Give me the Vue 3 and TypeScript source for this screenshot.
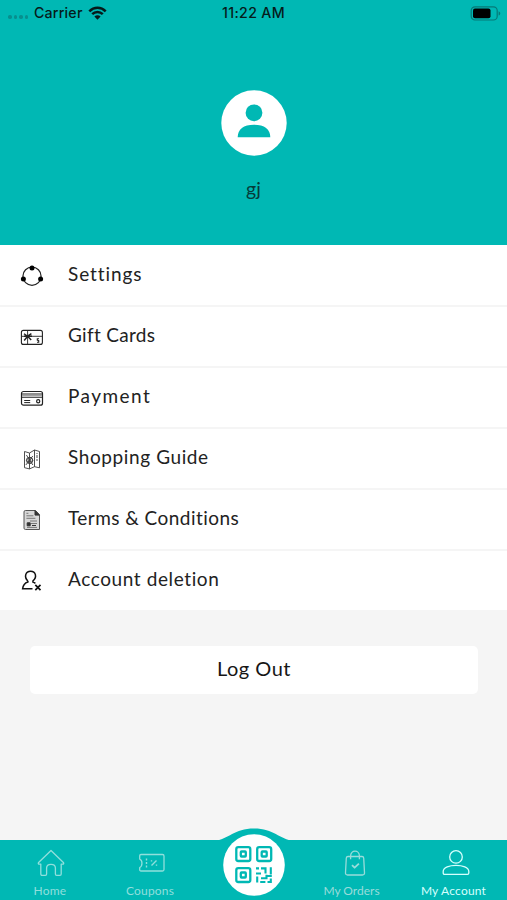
<script setup lang="ts">
interface MenuItem {
  icon: string
  label: string
  spacing: number
}

const items: MenuItem[] = [
  { icon: 'settings', label: 'Settings', spacing: 0.9 },
  { icon: 'gift', label: 'Gift Cards', spacing: 0.3 },
  { icon: 'payment', label: 'Payment', spacing: 1.45 },
  { icon: 'guide', label: 'Shopping Guide', spacing: 0.6 },
  { icon: 'terms', label: 'Terms & Conditions', spacing: 0.45 },
  { icon: 'deletion', label: 'Account deletion', spacing: 0.6 },
]
</script>

<template>
  <main class="screen">
    <header class="hero">
      <div class="status">
        <div class="carrier">
          <span class="dots"><i v-for="n in 4" :key="n"></i></span>
          <span class="carrier-name">Carrier</span>
          <svg class="wifi" width="19" height="14" viewBox="0 0 19 14">
            <path d="M1.3 5.3C5.9.7 13.1.7 17.7 5.3M4.2 8.2c3-2.9 7.6-2.9 10.6 0" fill="none" stroke="#061b1b" stroke-width="2.5" />
            <path d="M9.5 13.7 6.4 10.5c1.7-1.6 4.5-1.6 6.2 0z" fill="#061b1b" />
          </svg>
        </div>
        <span class="time">11:22 AM</span>
        <svg class="battery" width="31" height="15" viewBox="0 0 31 15">
          <rect x="1.2" y=".8" width="26" height="13.2" rx="3.8" fill="none" stroke="#067977" stroke-width="1.2" />
          <rect x="3" y="2.6" width="17.5" height="9.6" rx="2" fill="#000" />
          <path d="M28.6 5.2c2.2.8 2.2 3.6 0 4.4z" fill="#067977" />
        </svg>
      </div>
      <svg class="avatar" width="66" height="66" viewBox="0 0 66 66">
        <circle cx="33" cy="33" r="32.7" fill="#fff" />
        <circle cx="33" cy="22.8" r="8.4" fill="#00b8b4" />
        <path d="M16.7 47.2c0-8 5.8-12.5 16.3-12.5s16.3 4.5 16.3 12.5z" fill="#00b8b4" />
      </svg>
      <div class="name">gj</div>
    </header>

    <nav class="menu">
      <div v-for="item in items" :key="item.icon" class="row">
        <svg class="row-icon" width="24" height="24" viewBox="0 0 24 24" fill="none" stroke="#222">
          <g v-if="item.icon === 'settings'">
            <circle cx="12" cy="12.2" r="9.1" stroke-width="1.2" />
            <g fill="#000" stroke="none">
              <circle cx="12" cy="4" r="2.5" /><circle cx="3.4" cy="15" r="2.5" /><circle cx="20.6" cy="15" r="2.5" />
            </g>
          </g>
          <g v-else-if="item.icon === 'gift'">
            <rect x="1.4" y="5.4" width="21" height="14" rx="2" stroke-width="1.1" />
            <path d="M1.5 11.3h21M7.6 5.5v14" stroke-width=".9" />
            <path d="M7.6 11.2 4 8.7M7.6 11.2l3.8-2.6M7.6 11.2 4.2 15.5M7.6 11.2l3.6 3.7M4 11.2h8" stroke-width="1.4" />
            <path d="M19 13.7h-1.7v1.5l1.4.4v1.7H17" stroke-width="1.1" />
          </g>
          <g v-else-if="item.icon === 'payment'">
            <rect x="1.5" y="5.5" width="21" height="13.7" rx="2" stroke-width="1.2" />
            <path d="M1.5 8h21M1.5 11.2h21" stroke-width="1.1" />
            <path d="M2 9.6h20" stroke="#999" />
            <path d="M4.2 14.5h6M4.2 16.6h6" stroke-width="1" />
            <circle cx="18.2" cy="15.3" r="1.6" stroke-width="1.2" />
          </g>
          <g v-else-if="item.icon === 'guide'" stroke-width=".9" stroke="#3c3c3c">
            <path d="m4.5 4.5 5 1.5 5-3 5 1.5v16.3l-5-1.1-5 2.2-5-1.2zM9.5 6v15.8M14.5 3v16.8" />
            <path d="M9.7 10.1 13 13l-3.3 4-3.3-4zM6.4 8l6.5 10M12.8 9l-7 9" />
            <circle cx="9.6" cy="13.4" r="3.2" /><circle cx="9.6" cy="13.4" r="1.2" />
            <path d="M17 8v3M16 13h2M17 6v1" />
          </g>
          <g v-else-if="item.icon === 'terms'" stroke-width="1" stroke="#333">
            <path d="M5.4 2.5h10.1l4 4.1v14.9H5.4c-.9 0-1.4-.5-1.4-1.4V3.9c0-.9.5-1.4 1.4-1.4z" fill="#d8d8d8" stroke="#555" />
            <path d="M15 2.6v4.5h4.3z" fill="#333" />
            <path d="M6.4 5.3h2M6.4 7.8h7M6.4 10.3h9M10 13h7M11 15.5h6M7 19.4h10" stroke="#777" />
            <path d="M7.2 14.8h3v3h-3z" fill="#333" /><path d="M12 17.5h4" />
          </g>
          <g v-else stroke-width="1.5" stroke="#111">
            <path d="M7.9 12C3.7 8 5.5 2.3 10.6 2.3s6.8 5.8 2.4 9.6l-.1 1.1c1.2.4 1.9.8 2.5 1.3M7.9 12v1C4.3 14.1 3 16.4 2.6 19.8h9.9" />
            <path d="m15.3 15.8 5.2 5.3m0-5.3-5.2 5.3" stroke-width="1.7" />
          </g>
        </svg>
        <span class="row-label" :style="{ letterSpacing: item.spacing + 'px' }">{{ item.label }}</span>
      </div>
    </nav>

    <button class="logout" type="button">Log Out</button>

    <footer class="tabs">
      <svg class="hump" width="80" height="13" viewBox="0 0 80 13">
        <path d="M0 13C15 11 20 .4 40 .4s25 10.6 40 12.6z" fill="#00b8b4" />
      </svg>
      <div class="tab home">
        <svg width="28" height="28" viewBox="0 0 28 28">
          <path d="m14 1.5 12.4 12c.7.8.2 1.6-.7 1.6h-1.5v10c0 .8-.5 1.3-1.3 1.3h-3.3c-.8 0-1.2-.5-1.2-1.3v-6c0-2.4-1.3-3.8-4.4-3.8s-4.4 1.4-4.4 3.8v6c0 .8-.5 1.3-1.2 1.3H5.1c-.8 0-1.3-.5-1.3-1.3v-10H2.3c-.9 0-1.4-.8-.7-1.6z" />
        </svg>
        <span>Home</span>
      </div>
      <div class="tab coupons">
        <svg width="28" height="28" viewBox="0 0 28 28">
          <path d="M3 5.5h21.5c1 0 1.5.5 1.5 1.5v13.5c0 1-.5 1.5-1.5 1.5H3c-.9 0-1.3-.5-1.3-1.3v-2.2c3-1.2 3-7.2 0-8.4V6.8c0-.8.4-1.3 1.3-1.3z" />
          <path d="M8.5 9.5v2m0 1.5v2m0 1.5v2M13.5 16.5l5-5m-5-.3v1.4m5 2.8v1.4" stroke-width="1.4" />
        </svg>
        <span>Coupons</span>
      </div>
      <div class="scan">
        <svg width="62" height="62" viewBox="0 0 62 62">
          <circle cx="31" cy="31" r="30.8" fill="#fff" />
          <g fill="none" stroke="#00b8b4" stroke-width="2.3">
            <g v-for="p in [[20.3, 20], [41.2, 20], [20.3, 41]]" :key="p.join('-')" :transform="`translate(${p[0]} ${p[1]})`">
              <rect x="-7" y="-6.8" width="14" height="13.8" rx="2" />
              <rect x="-2.5" y="-2.5" width="5" height="5" rx=".7" />
            </g>
          </g>
          <path d="M33 34.4h3M38 34.4h4.5v5.2M33 39.5h5M34.2 42.5v6M47.8 33.3v7.2M38 44.2h5.5v-3.5M43.5 42h5.3M37.2 48h5.2M44.5 48h3.3v-3.6" fill="none" stroke="#00b8b4" stroke-width="2.1" />
        </svg>
      </div>
      <div class="tab orders">
        <svg width="28" height="28" viewBox="0 0 28 28">
          <path d="M7 7.5h14c1 0 1.6.6 1.7 1.5l.8 14.8c.1 1.4-.7 2.2-2 2.2h-15c-1.3 0-2.1-.8-2-2.2L5.3 9c.1-.9.7-1.5 1.7-1.5zM9.6 10.3V7c0-6.5 8.8-6.5 8.8 0v3.3" />
          <path d="m11 16.2 2.6 2.5 4.3-4.1" stroke-width="1.8" />
        </svg>
        <span>My Orders</span>
      </div>
      <div class="tab account">
        <svg width="28" height="28" viewBox="0 0 28 28">
          <circle cx="14" cy="7.9" r="6.3" />
          <path d="M1.2 22.5c0-8.2 25.6-8.2 25.6 0v1.5c0 .8-.5 1.3-1.3 1.3h-23c-.8 0-1.3-.5-1.3-1.3z" />
        </svg>
        <span>My Account</span>
      </div>
    </footer>
  </main>
</template>

<style>
body { margin: 0; }
</style>

<style scoped>
.screen {
  width: 507px;
  height: 900px;
  display: flex;
  flex-direction: column;
  overflow: hidden;
  background: #f5f5f5;
  color: #222;
  font-family: Lato, "Noto Sans", sans-serif;
}
.hero {
  height: 245px;
  flex: none;
  display: flex;
  flex-direction: column;
  align-items: center;
  background: #00b8b4;
}
.status {
  box-sizing: border-box;
  width: 100%;
  height: 26px;
  padding: 0 6px 0 8px;
  display: grid;
  grid-template-columns: 1fr auto 1fr;
  align-items: center;
  color: #061b1b;
  font: 500 14.2px/26px Inter, sans-serif;
}
.carrier { display: flex; align-items: center; }
.dots { display: flex; gap: 2px; width: 26px; padding-top: 8px; }
.dots i { width: 3.5px; height: 3.5px; border-radius: 50%; background: #078f8e; }
.carrier-name { letter-spacing: .2px; }
.time { margin-right: 2px; letter-spacing: .35px; }
.wifi { margin-left: 5px; }
.battery { justify-self: end; }
.avatar { margin-top: 64px; }
.name { margin-top: 20px; font-size: 19.5px; line-height: 26px; color: #063b3a; }
.menu { flex: none; padding-top: 1px; background: #fff; }
.row {
  box-sizing: border-box;
  height: 61px;
  padding-left: 19.5px;
  display: flex;
  align-items: center;
  gap: 24.5px;
  border-bottom: 2px solid #f5f5f5;
}
.row-icon { flex: none; }
.row-label { padding-bottom: 4px; font-size: 19px; line-height: 24px; white-space: nowrap; }
.logout {
  flex: none;
  margin: 34px 29px 0 30px;
  height: 48px;
  padding: 0 0 5px;
  border: 0;
  border-radius: 5px;
  background: #fff;
  color: #161616;
  font: 20px/24px Lato, "Noto Sans", sans-serif;
  letter-spacing: .5px;
}
.tabs {
  position: relative;
  height: 60px;
  margin-top: auto;
  display: grid;
  grid-template-columns: 100px 100px 107px 89px 115px;
  background: #00b8b4;
}
.hump { position: absolute; left: 214px; top: -12px; }
.tab {
  display: flex;
  flex-direction: column;
  align-items: center;
  padding-top: 9px;
  color: #90dfdc;
  font-size: 12px;
  line-height: 16px;
  letter-spacing: .2px;
  white-space: nowrap;
}
.tab svg { fill: none; stroke: currentColor; stroke-width: 1.3; stroke-linejoin: round; }
.tab span { margin-top: 6px; }
.home svg { margin-left: 2px; }
.coupons svg { margin-left: 4px; }
.orders svg { margin-left: 7px; }
.orders { color: #99dcda; letter-spacing: 0; }
.account { color: #d5fffd; }
.account svg { margin-left: 4px; }
.scan { position: relative; margin-top: -6px; padding-left: 23px; }
</style>
